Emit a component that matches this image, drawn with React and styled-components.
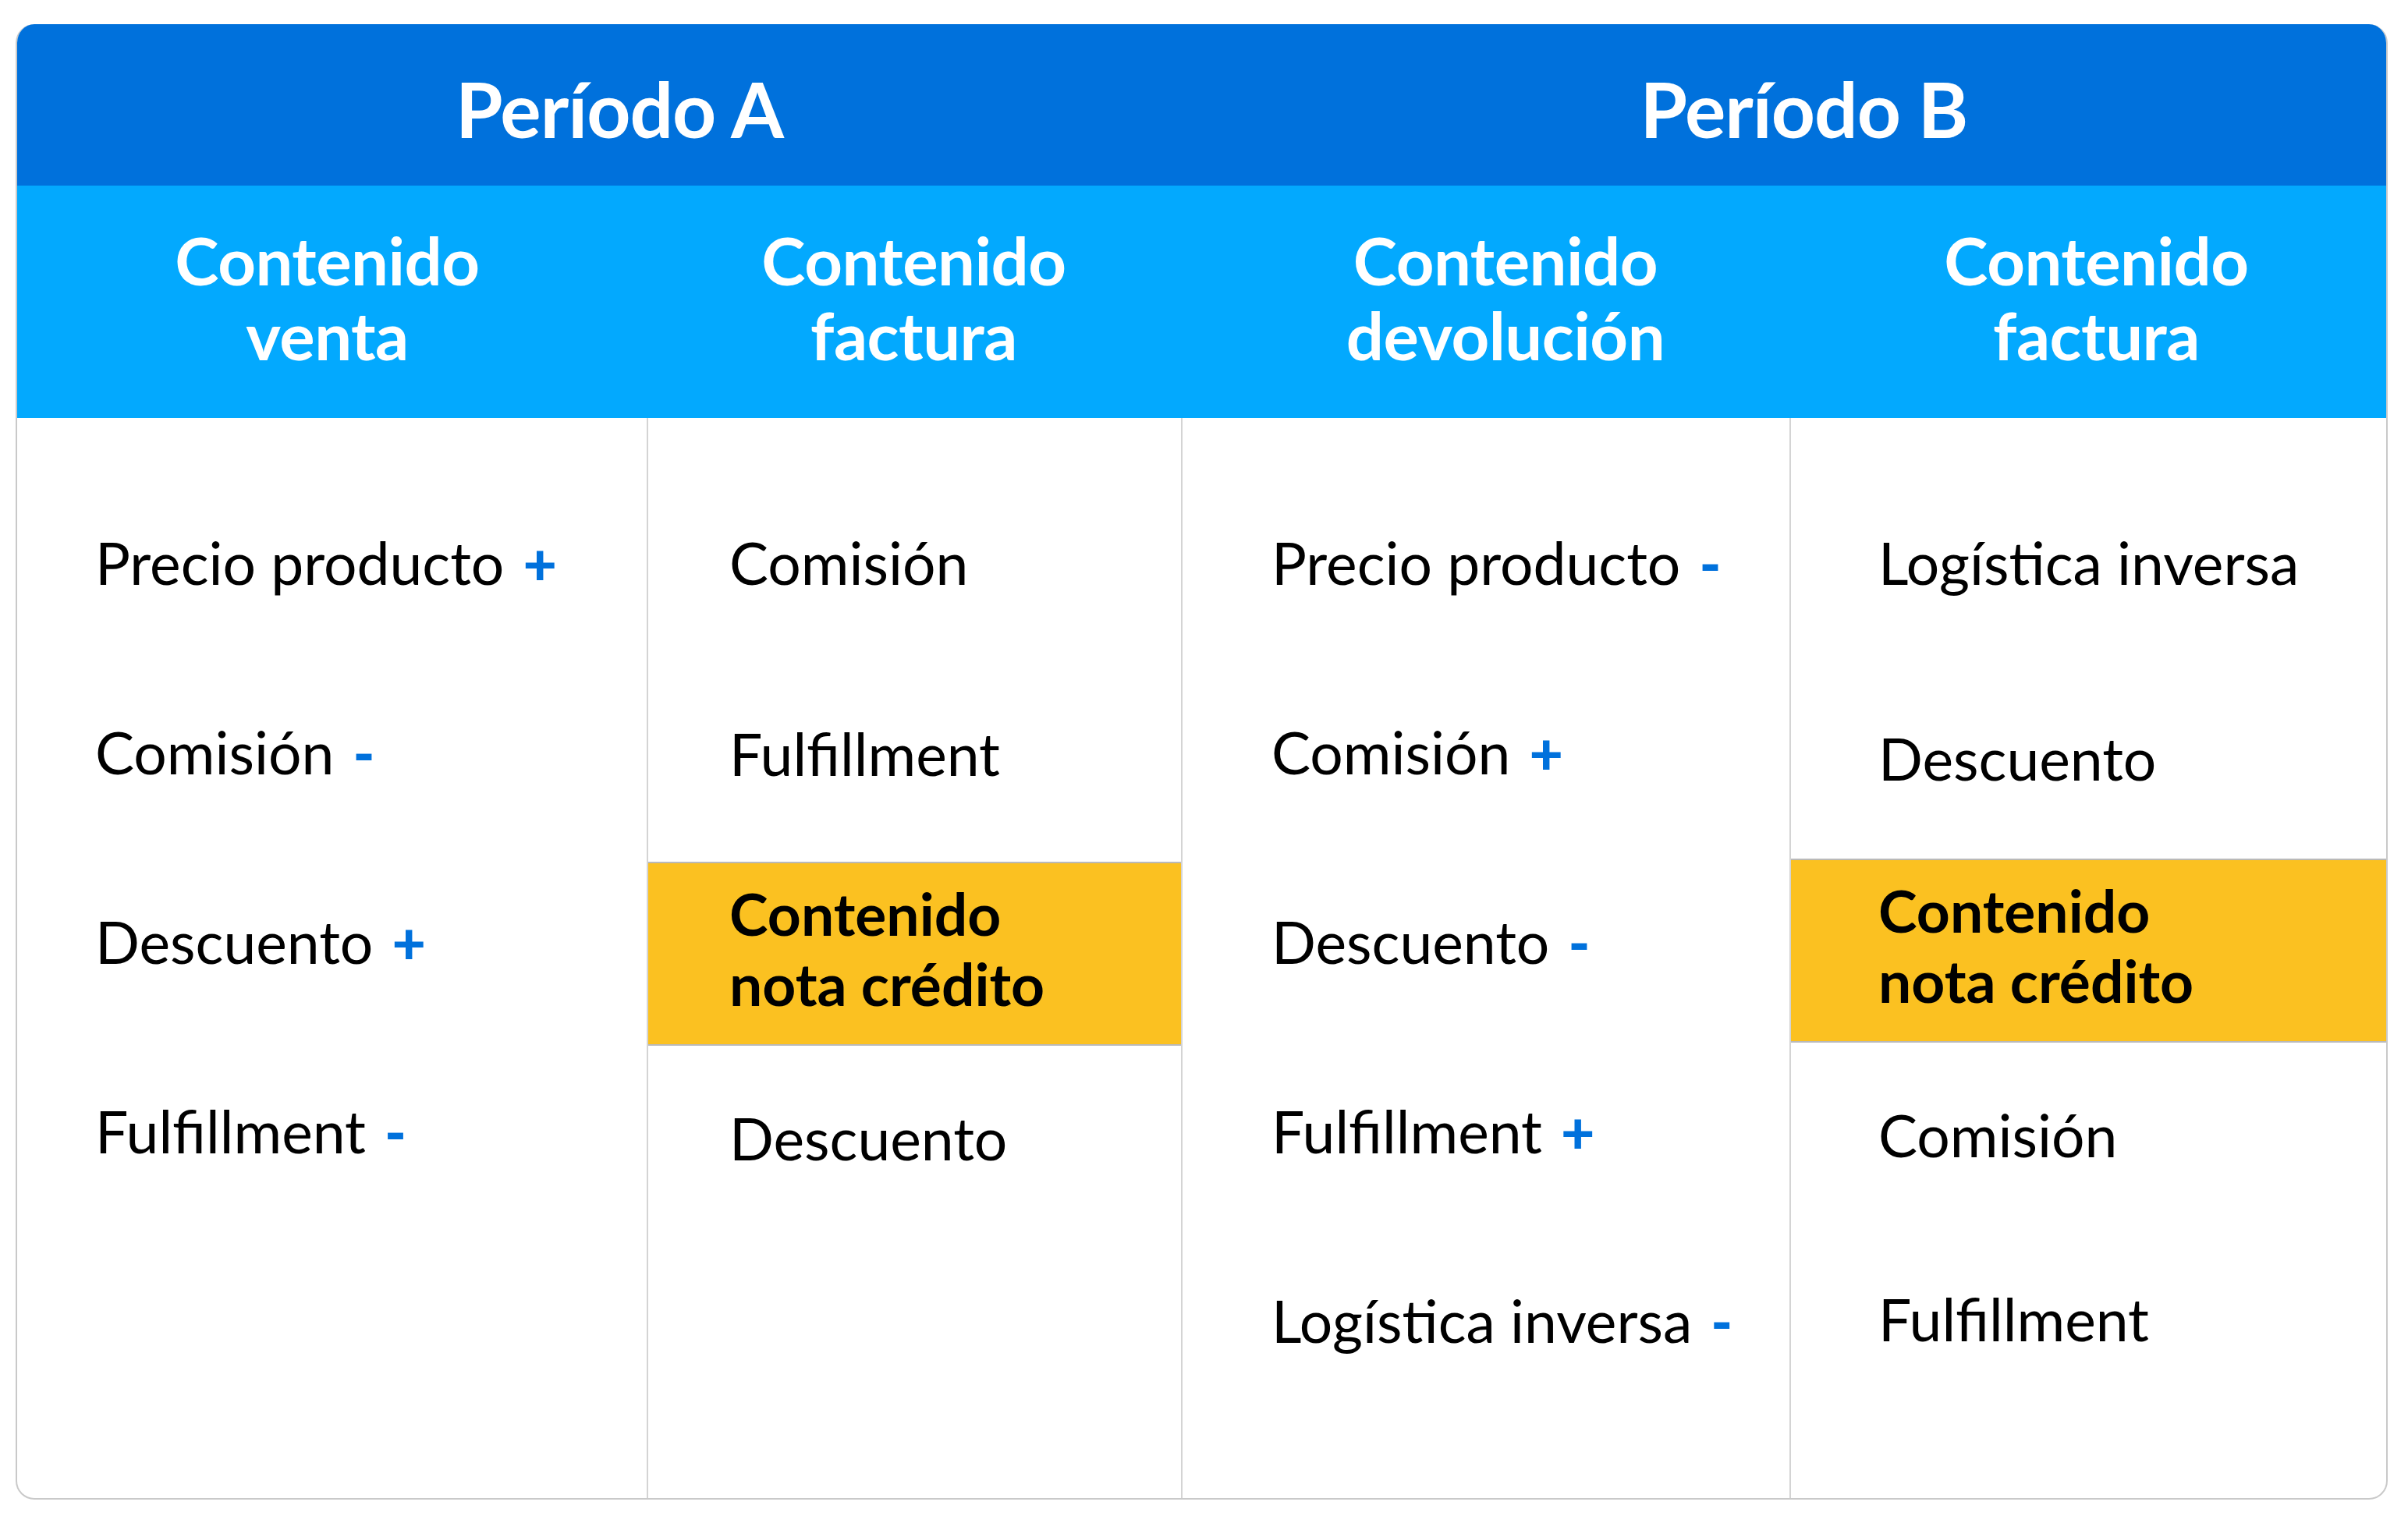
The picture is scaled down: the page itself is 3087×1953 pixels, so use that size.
import React from "react";
import styled, { createGlobalStyle } from "styled-components";

const GlobalStyle = createGlobalStyle`
  html, body {
    margin: 0;
    padding: 0;
    background: #ffffff;
  }
  body {
    font-family: Lato, "Open Sans", sans-serif;
  }
`;

const Page = styled.div`
  padding: 31px 0 0 20px;
`;

const Card = styled.div`
  width: 3041px;
  height: 1892px;
  box-sizing: border-box;
  border: 2px solid #c9c9c9;
  border-top: none;
  border-radius: 24px;
  overflow: hidden;
  display: grid;
  grid-template-columns: 807px 685px 780px 1fr;
  grid-template-rows: 207px 298px 1fr;
`;

const PeriodCell = styled.div`
  grid-column: span 2;
  background: #0071dc;
  display: flex;
  align-items: center;
  justify-content: center;
  padding-left: 52px;
  padding-top: 8px;
  color: #ffffff;
  font-weight: 700;
  font-size: 98px;
  letter-spacing: -1px;
`;

const HeadCell = styled.div`
  background: #03a9fe;
  display: flex;
  align-items: center;
  justify-content: center;
  padding-left: ${(p) => (p.$shift > 0 ? p.$shift : 0)}px;
  padding-right: ${(p) => (p.$shift < 0 ? -p.$shift : 0)}px;
  padding-bottom: 12px;
  color: #ffffff;
  font-weight: 700;
  font-size: 85px;
  line-height: 96px;
  text-align: center;
  letter-spacing: -0.5px;
`;

const Column = styled.div`
  display: flex;
  flex-direction: column;
  padding-top: 63px;
  border-left: ${(p) => (p.$first ? "none" : "2px solid #d4d4d4")};
`;

const Item = styled.div`
  height: ${(p) => p.$h || 243}px;
  flex-shrink: 0;
  display: flex;
  align-items: center;
  padding-left: ${(p) => p.$pad}px;
  font-size: 75px;
  color: #000000;
  white-space: nowrap;
`;

const Sign = styled.span`
  color: #0071dc;
  font-weight: 900;
  margin-left: 24px;
`;

const Note = styled.div`
  height: 236px;
  flex-shrink: 0;
  box-sizing: border-box;
  margin-top: ${(p) => p.$mt}px;
  padding-bottom: 14px;
  background: #fbc121;
  border-top: 2px solid #b9b9b9;
  border-bottom: 2px solid #b9b9b9;
  display: flex;
  align-items: center;
  padding-left: ${(p) => p.$pad}px;
  font-size: 75px;
  line-height: 90px;
  font-weight: 700;
  color: #000000;
`;

const Row = ({ text, sign, pad, h }) => (
  <Item $pad={pad} $h={h}>
    {text}
    {sign && <Sign>{sign}</Sign>}
  </Item>
);

const NotaCredito = ({ pad, mt }) => (
  <Note $pad={pad} $mt={mt}>
    <div>
      Contenido
      <br />
      nota crédito
    </div>
  </Note>
);

export default function App() {
  return (
    <>
      <GlobalStyle />
      <Page>
        <Card>
          <PeriodCell>Período A</PeriodCell>
          <PeriodCell>Período B</PeriodCell>

          <HeadCell $shift={-12}>
            Contenido
            <br />
            venta
          </HeadCell>
          <HeadCell>
            Contenido
            <br />
            factura
          </HeadCell>
          <HeadCell $shift={52}>
            Contenido
            <br />
            devolución
          </HeadCell>
          <HeadCell $shift={22}>
            Contenido
            <br />
            factura
          </HeadCell>

          <Column $first>
            <Row pad={100} text="Precio producto" sign="+" />
            <Row pad={100} text="Comisión" sign="-" />
            <Row pad={100} text="Descuento" sign="+" />
            <Row pad={100} text="Fulfillment" sign="-" />
          </Column>

          <Column>
            <Row pad={104} text="Comisión" />
            <Row pad={104} h={247} text="Fulfillment" />
            <NotaCredito pad={104} mt={16} />
            <Row pad={104} h={236} text="Descuento" />
          </Column>

          <Column>
            <Row pad={114} text="Precio producto" sign="-" />
            <Row pad={114} text="Comisión" sign="+" />
            <Row pad={114} text="Descuento" sign="-" />
            <Row pad={114} text="Fulfillment" sign="+" />
            <Row pad={114} text="Logística inversa" sign="-" />
          </Column>

          <Column>
            <Row pad={112} text="Logística inversa" />
            <Row pad={112} h={259} text="Descuento" />
            <NotaCredito pad={112} mt={0} />
            <Row pad={112} h={236} text="Comisión" />
            <Row pad={112} h={236} text="Fulfillment" />
          </Column>
        </Card>
      </Page>
    </>
  );
}
